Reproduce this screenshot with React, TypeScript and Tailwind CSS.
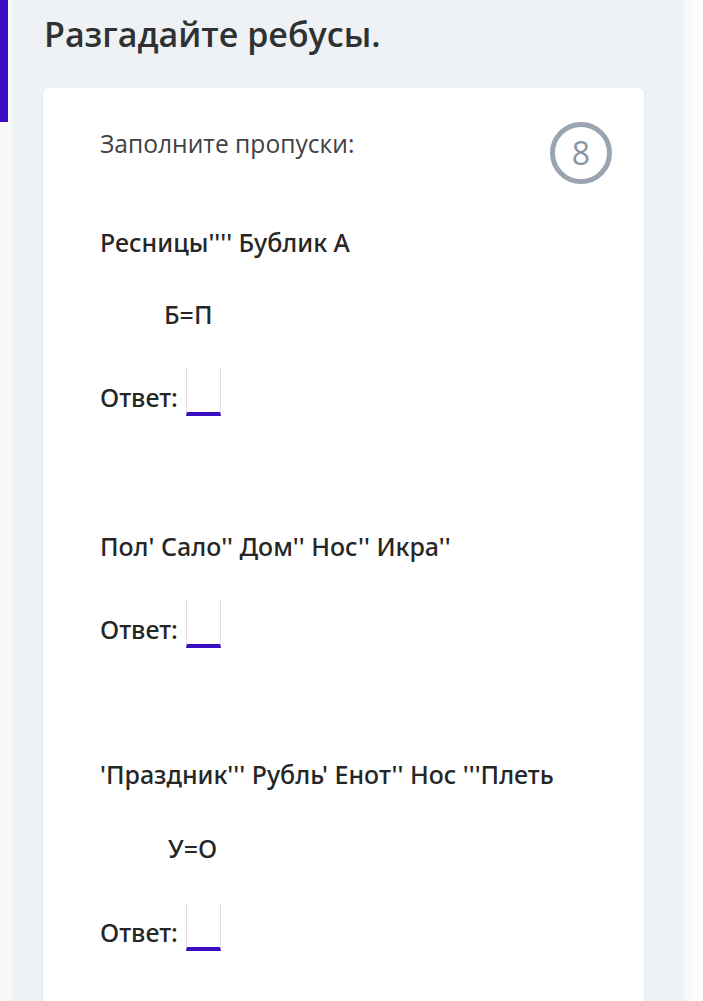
import React from 'react';

const qText = "text-[25px] leading-[30px] font-medium text-[#262626] font-['Noto_Sans','Open_Sans',sans-serif]";

const AnswerRow: React.FC<{ mt: string }> = ({ mt }) => (
  <div className={`flex items-end ${mt}`}>
    <span className={`${qText} mb-[4px]`}>Ответ:</span>
    <span className="ml-[8px] block w-[35px] h-[48px] border-x border-[#dcdce2] border-b-[4px] border-b-[#3a0cc2]" />
  </div>
);

const App: React.FC = () => {
  return (
    <div className="flex min-h-[1001px] bg-white" style={{ fontFamily: '"Open Sans", "Liberation Sans", sans-serif' }}>
      {/* left accent */}
      <div className="w-[12px] bg-[#f6f8f9]">
        <div className="w-[8px] h-[122px] bg-[#3b0cc4]" />
      </div>

      <main className="w-[671px] bg-[#eef2f4] flex flex-col">
        <h1 className="ml-[32px] mt-[11px] text-[34px] leading-[46px] font-semibold text-[#2f3133]">
          Разгадайте ребусы.
        </h1>

        <section className="ml-[31px] mt-[31px] w-[601px] flex-1 bg-white rounded-t-md shadow-[0_1px_4px_rgba(0,0,0,0.06)] pl-[57px] pr-[32px] pt-[34px] pb-[40px]">
          <div className="flex items-start justify-between">
            <p className="mt-[8px] text-[24.6px] leading-[28px] text-[#3f4246]">Заполните пропуски:</p>
            <div className="w-[62px] h-[62px] rounded-full border-[5px] border-[#9ba4b1] flex items-center justify-center">
              <span className="text-[32px] leading-none text-[#8a94a2]">8</span>
            </div>
          </div>

          <p className={`mt-[43px] ${qText}`}>Ресницы'''' Бублик А</p>
          <p className={`mt-[42px] pl-[64px] ${qText}`}>Б=П</p>
          <AnswerRow mt="mt-[39px]" />

          <p className={`mt-[115px] ${qText}`}>Пол' Сало'' Дом'' Нос'' Икра''</p>
          <AnswerRow mt="mt-[39px]" />

          <p className={`mt-[111px] ${qText}`}>'Праздник''' Рубль' Енот'' Нос '''Плеть</p>
          <p className={`mt-[44px] pl-[68px] ${qText}`}>У=О</p>
          <AnswerRow mt="mt-[40px]" />
        </section>
      </main>

      <div className="flex-1 bg-gradient-to-r from-[#f4f7f7] to-white" />
    </div>
  );
};

export default App;
